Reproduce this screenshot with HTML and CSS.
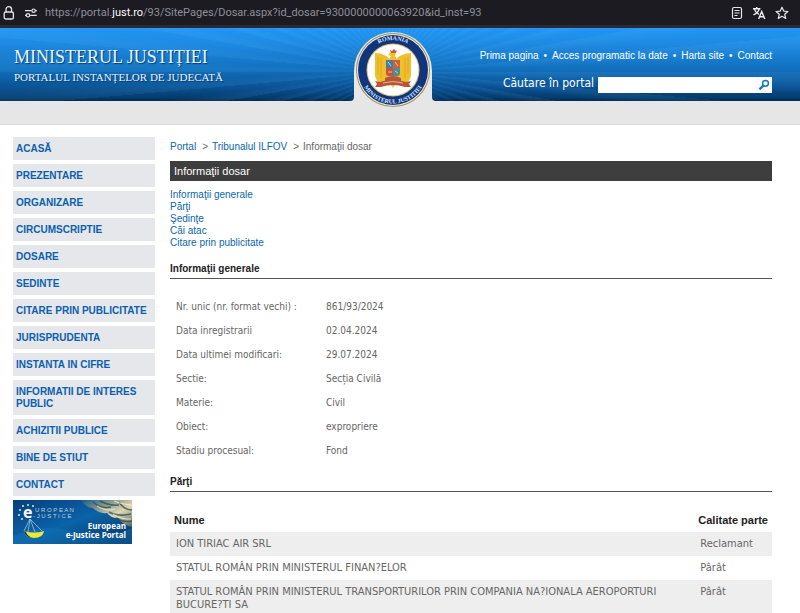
FILE: index.html
```html
<!DOCTYPE html>
<html lang="ro">
<head>
<meta charset="utf-8">
<meta name="viewport" content="width=device-width, initial-scale=1">
<title>Informaţii dosar</title>
<link rel="stylesheet" href="styles.css">
</head>
<body>
<div class="urlbar">
  <svg class="lock" width="12" height="16" viewBox="0 0 12 16" fill="none" stroke="#e4e4ea" stroke-width="1.3"><rect x="1.2" y="7" width="9.2" height="7" rx="1.6"/><path d="M3 7V4.4a2.8 2.8 0 0 1 5.6 0V7"/></svg>
  <svg class="tune" width="12" height="10" viewBox="0 0 12 10" fill="none" stroke="#e4e4ea" stroke-width="1.2"><path d="M0 2.7h6.4M5.2 7.3h6.6M0 7.3h1"/><circle cx="8.6" cy="2.7" r="1.7"/><circle cx="3" cy="7.3" r="1.7"/><path d="M10.3 2.7h1.5"/></svg>
  <span class="url">https://portal.<b>just.ro</b>/93/SitePages/Dosar.aspx?id_dosar=9300000000063920&amp;id_inst=93</span>
  <span class="tools">
    <button aria-label="Reader"><svg width="12" height="14" viewBox="0 0 12 14" fill="none" stroke="#e4e4ea" stroke-width="1.2"><rect x="1.5" y="1.5" width="9" height="11" rx="1.5"/><path d="M3.5 4.5h5M3.5 7h5M3.5 9.5h3"/></svg></button>
    <button aria-label="Translate"><svg width="14" height="14" viewBox="0 0 14 14" fill="none" stroke="#f0f0f4" stroke-width="1.4"><path d="M1 2.7h7.4M4.7 1v1.7M2.2 2.9c.7 2.3 2.4 4.2 4.8 5.4M7.2 2.9C6.500 5.600 4.500 7.600 1.500 8.900M6.600 13l3.100-7.500L12.800 13M7.700 10.800h4"/></svg></button>
    <button aria-label="Bookmark"><svg width="14" height="14" viewBox="0 0 14 14" fill="none" stroke="#e4e4ea" stroke-width="1.2" stroke-linejoin="round"><path d="M7 1.200l1.700 3.900 4.200.4-3.200 2.800 1 4.200L7 10.300l-3.700 2.200 1-4.200L1.100 5.500l4.200-.4z"/></svg></button>
  </span>
</div>

<header class="banner">
  <div class="brand">
    <p class="title">MINISTERUL JUSTIȚIEI</p>
    <p class="subtitle">PORTALUL INSTANȚELOR DE JUDECATĂ</p>
  </div>
  <svg class="emblem" width="96" height="80" viewBox="0 0 96 80" role="img" aria-label="Emblema">
    <defs>
      <path id="arcTop" d="M18 39a30 30 0 0 1 60 0"/>
      <path id="arcBottom" d="M14.500 39a33.500 33.500 0 0 0 67 0"/>
    </defs>
    <path d="M5 80v-7q4 0 4-4V43a39 39 0 0 1 78 0v26q0 4 4 4v7z" fill="#e6e6e6"/>
    <circle cx="48" cy="42" r="37" fill="#9a9163"/>
    <circle cx="48" cy="42" r="36" fill="#f2efd8"/>
    <circle cx="48" cy="42" r="35" fill="#10357e"/>
    <circle cx="48" cy="42" r="26.500" fill="#d9c272"/>
    <circle cx="48" cy="42" r="25.500" fill="#fff"/>
    <g class="ring" transform="translate(0 3)">
      <text><textPath href="#arcTop" startOffset="50%">ROMANIA</textPath></text>
      <text><textPath href="#arcBottom" startOffset="50%">MINISTERUL JUSTITIEI</textPath></text>
    </g>
    <g fill="#f0c02c">
      <path d="M46 24q3-2 5 0l-1 4 2 3q1-3 5-4 4-2 9-2v23q-2 6-6 8l-7-6v7h-10v-7l-7 6q-5-3-6-8V25q6 0 9 2 4 1 5 4l2-3-3-1z"/>
      <path d="M43 52l5 8 5-8z"/>
    </g>
    <path d="M33 29v17M36 30v20M63 29v17M60 30v20" stroke="#dda61f" fill="none"/>
    <path d="M45 22l2 1 2-2 2 2 1-1-1 3h-5z" fill="#d05a30"/>
    <path d="M41 32h7v8h-7z" fill="#3f7fae"/><path d="M48 32h7v8h-7z" fill="#c9604a"/>
    <path d="M41 40h7v8h-4q-3 0-3-3z" fill="#c9513f"/><path d="M48 40h7v5q0 3-3 3h-4z" fill="#4b8b9a"/>
    <path d="M43 34l3 4M50 34l3 4M43 44h4M50 43l3 2" stroke="#f2ce55" fill="none"/>
    <path d="M40 50q8-4 16 0v3q-8-3-16 0zM35 54q13-5 26 0l5-1-2 3 2 3h-6q-12-4-24 0h-6l2-3-2-3z" fill="#b5563a"/>
    <path d="M38 55q10-3 20 0" stroke="#e7b489" fill="none"/>
  </svg>
  <div class="tools-area">
    <nav class="top-links">
      <a href="#">Prima pagina</a><span>•</span><a href="#">Acces programatic la date</a><span>•</span><a href="#">Harta site</a><span>•</span><a href="#">Contact</a>
    </nav>
    <form class="search">
      <label for="q">Căutare în portal</label>
      <input id="q" type="text">
      <button type="button" aria-label="Caută"><svg width="12" height="12" viewBox="0 0 12 12" fill="none" stroke="#1579b8" stroke-width="1.500"><circle cx="7.500" cy="4.300" r="2.900"/><path d="M5.300 6.600L1.500 10.400" stroke-width="2.200"/></svg></button>
    </form>
  </div>
</header>
<div class="strip"></div>

<div class="page">
  <aside class="sidebar">
    <nav class="menu">
      <a href="#">ACASĂ</a>
      <a href="#">PREZENTARE</a>
      <a href="#">ORGANIZARE</a>
      <a href="#">CIRCUMSCRIPTIE</a>
      <a href="#">DOSARE</a>
      <a href="#">SEDINTE</a>
      <a href="#">CITARE PRIN PUBLICITATE</a>
      <a href="#">JURISPRUDENTA</a>
      <a href="#">INSTANTA IN CIFRE</a>
      <a href="#">INFORMATII DE INTERES PUBLIC</a>
      <a href="#">ACHIZITII PUBLICE</a>
      <a href="#">BINE DE STIUT</a>
      <a href="#">CONTACT</a>
    </nav>
    <a href="#" class="ejustice">
      <svg width="119" height="44" viewBox="0 0 119 44" role="img" aria-label="European e-Justice Portal">
        <defs>
          <linearGradient id="sea" x1="0" y1="0" x2="1" y2="1"><stop offset="0" stop-color="#083f7d"/><stop offset=".5" stop-color="#0b63a8"/><stop offset="1" stop-color="#053260"/></linearGradient>
          <linearGradient id="stone" x1="0" y1="0" x2="1" y2="1"><stop offset="0" stop-color="#16598a"/><stop offset=".35" stop-color="#8e9e91"/><stop offset=".6" stop-color="#e0d6b0"/><stop offset="1" stop-color="#4a6560"/></linearGradient>
        </defs>
        <rect width="119" height="44" fill="url(#sea)"/>
        <path d="M0 36q30-14 60-4t59-4v16H0z" fill="#1478bb" opacity=".4"/>
        <path d="M68 0h51v27q-9-2-14-9-6 1-11-5-8 1-14-5-8-1-12-8z" fill="url(#stone)"/>
        <path d="M80 2q8 7 18 5M87 1q9 5 19 4M96 12q9 5 22 2M106 2q5 8 13 8M103 18q8 5 16 3" stroke="#294e51" stroke-width="1.500" fill="none" opacity=".75"/>
        <path d="M84 6q9 6 18 3M101 1q6 3 17 4M100 14q9 6 18 5" stroke="#fff4cf" fill="none" opacity=".8"/>
        <g fill="#e6edcf"><circle cx="15" cy="5" r="1"/><circle cx="10" cy="6" r="1"/><circle cx="7" cy="10" r="1"/><circle cx="6" cy="15" r="1"/><circle cx="9" cy="19" r="1"/><circle cx="20" cy="6" r="1"/></g>
        <path d="M17 19L11 31M17 19l-2 13M17 19l5 13M17 19l12 12" stroke="#b8cfdd" stroke-width=".7" fill="none"/>
        <path d="M11 31q10 3 20 0-1 7-10 7t-10-7z" fill="#ece83a"/><path d="M11 31q1 6 9 7-6-2-7-6z" fill="#092a5c"/>
        <text class="e-mark" x="10" y="18">e</text>
        <text class="e-small" x="22" y="12">U R O P E A N</text>
        <text class="e-small" x="20" y="18">- J U S T I C E</text>
        <text class="e-big" x="113" y="29">European</text>
        <text class="e-big" x="113" y="38">e-Justice Portal</text>
      </svg>
    </a>
  </aside>

  <main class="content">
    <nav class="crumbs"><a href="#">Portal</a><span>&gt;</span><a href="#">Tribunalul ILFOV</a><span>&gt;</span><em>Informaţii dosar</em></nav>
    <h1>Informaţii dosar</h1>
    <nav class="anchors">
      <a href="#generale">Informaţii generale</a>
      <a href="#parti">Părţi</a>
      <a href="#">Şedinţe</a>
      <a href="#">Căi atac</a>
      <a href="#">Citare prin publicitate</a>
    </nav>
    <h2 id="generale">Informaţii generale</h2>
    <dl class="details">
      <dt>Nr. unic (nr. format vechi) :</dt><dd>861/93/2024</dd>
      <dt>Data inregistrarii</dt><dd>02.04.2024</dd>
      <dt>Data ultimei modificari:</dt><dd>29.07.2024</dd>
      <dt>Sectie:</dt><dd>Secția Civilă</dd>
      <dt>Materie:</dt><dd>Civil</dd>
      <dt>Obiect:</dt><dd>expropriere</dd>
      <dt>Stadiu procesual:</dt><dd>Fond</dd>
    </dl>
    <h2 id="parti">Părţi</h2>
    <table class="parties">
      <thead><tr><th>Nume</th><th class="role">Calitate parte</th></tr></thead>
      <tbody>
        <tr><td>ION TIRIAC AIR SRL</td><td>Reclamant</td></tr>
        <tr><td>STATUL ROMÂN PRIN MINISTERUL FINAN?ELOR</td><td>Pârât</td></tr>
        <tr><td>STATUL ROMÂN PRIN MINISTERUL TRANSPORTURILOR PRIN COMPANIA NA?IONALA AEROPORTURI BUCURE?TI SA</td><td>Pârât</td></tr>
      </tbody>
    </table>
  </main>
</div>
</body>
</html>
```
FILE: styles.css
```css
* { box-sizing: border-box; }
body {
  margin: 0;
  background: #fff;
  color: #666;
  font: 10px/12px "Liberation Sans", Arial, sans-serif;
}
p, h1, h2, dl, dd { margin: 0; }
a { color: #0b67a9; text-decoration: none; }
button { padding: 0; border: 0; background: none; display: flex; align-items: center; justify-content: center; }
svg { display: block; flex: none; }

.urlbar {
  display: flex;
  align-items: center;
  height: 28px;
  padding: 0 11px 0 3px;
  background: #1c1b22;
  border-bottom: 3px solid #2a2935;
}
.urlbar .tune { margin-left: 10px; }
.url { margin-left: 8px; color: #8f8f98; font: 11px/16px Roboto, sans-serif; white-space: nowrap; }
.url b { color: #fbfbfe; font-weight: 400; }
.tools { display: flex; gap: 9px; margin-left: auto; }

.banner {
  display: grid;
  grid-template-columns: 1fr 96px 1fr;
  height: 73px;
  padding: 0 28px 0 14px;
  background: linear-gradient(#2196f3 0, #1e8be4 20%, #1271bf 55%, #0a5496 80%, #053a6c 96%, #032a50 100%);
  position: relative;
}
.banner::before {
  content: "";
  position: absolute;
  inset: 0;
  background: repeating-conic-gradient(from 0deg at 49% 60%, rgba(120, 200, 255, .08) 0deg 1deg, rgba(120, 200, 255, 0) 3deg 5deg);
}
.banner > * { position: relative; }
.brand { padding-top: 17px; color: #e8f4ff; font-family: "Liberation Serif", serif; text-shadow: 1px 1px 1px #063a6b; white-space: nowrap; }
.title { font-size: 18px; line-height: 24px; }
.subtitle { font-size: 11px; line-height: 16px; }
.emblem { overflow: visible; }
.ring text { fill: #dfe8f7; font: bold 6px "Liberation Serif", serif; text-anchor: middle; }
.tools-area { display: flex; flex-direction: column; align-items: flex-end; gap: 14px; padding-top: 21px; }
.top-links { display: flex; gap: 5px; line-height: 14px; color: #fff; white-space: nowrap; }
.top-links a { color: #fff; }
.search { display: flex; align-items: center; height: 16px; }
.search label { margin: -4px 4px 0 0; color: #fff; font: 12px/16px "DejaVu Sans Condensed", sans-serif; white-space: nowrap; }
.search input { width: 158px; height: 16px; padding: 0 2px; border: 0; background: #fff; font-size: 10px; }
.search button { width: 16px; height: 16px; background: #fafafa; }

.strip { height: 24px; background: #e6e6e6; border-bottom: 1px solid #d9d9d9; }

.page { display: flex; gap: 15px; padding: 12px 28px 0 13px; }
.sidebar { flex: 0 0 142px; }
.menu { display: flex; flex-direction: column; gap: 4px; }
.menu a { padding: 6px 3px 5px; background: #e5e7eb; color: #0b60ae; font-weight: 700; }
.ejustice { display: block; margin-top: 4px; }
.e-mark { fill: #fff; font: bold 16px "Open Sans", sans-serif; }
.e-small { fill: #bdd0e4; font: 6px "Liberation Sans", sans-serif; }
.e-big { fill: #fff; font: bold 8px "Open Sans", sans-serif; text-anchor: end; }

.content { flex: 1; min-width: 0; padding-top: 4px; }
.crumbs { display: flex; gap: 4px; }
.crumbs a + span { margin-left: 2px; }
.crumbs em { font-style: normal; }
h1 { margin-top: 8px; padding: 0 4px; background: #3e3e3e; color: #fff; font-size: 11px; line-height: 20px; font-weight: 400; }
.anchors { display: flex; flex-direction: column; margin-top: 8px; }
.anchors a { align-self: flex-start; }
h2 { margin-top: 11px; padding-bottom: 1px; border-bottom: 1px solid #555; color: #222; font-size: 10px; line-height: 16px; }
.anchors + h2 { margin-top: 12px; }
.details { display: grid; grid-template-columns: 150px 1fr; padding: 16px 6px 0; font: 10px/24px "DejaVu Sans Condensed", sans-serif; }
.parties { width: 100%; margin-top: 18px; border-collapse: collapse; }
.parties th { padding: 4px 4px 6px; color: #222; font-size: 11px; text-align: left; }
.parties .role { width: 75px; white-space: nowrap; }
.parties td { padding: 5px 6px 6px; font: 11px/13px "DejaVu Sans Condensed", sans-serif; vertical-align: top; }
.parties tbody tr:nth-child(odd) { background: #eee; }
```
